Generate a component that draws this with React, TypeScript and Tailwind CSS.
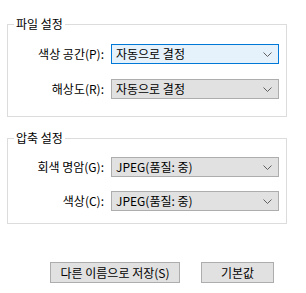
import React from "react";

const Chevron = () => (
  <svg width="9" height="5" viewBox="0 0 9 5" className="shrink-0">
    <path d="M0.5 0.5 L4.5 4.5 L8.5 0.5" fill="none" stroke="#606060" strokeWidth="1" />
  </svg>
);

const Combo = ({ value, focused }: { value: string; focused?: boolean }) => (
  <div
    className={
      focused
        ? "flex h-[20px] w-[168px] items-center justify-between border border-[#0078d7] bg-[#e5f1fb] pl-[4px] pr-[6px]"
        : "flex h-[20px] w-[168px] items-center justify-between border border-[#adadad] bg-[#e1e1e1] pl-[4px] pr-[6px]"
    }
  >
    <span className="leading-none">{value}</span>
    <Chevron />
  </div>
);

const Row = ({ label, value, focused }: { label: string; value: string; focused?: boolean }) => (
  <div className="flex items-center gap-[7px]">
    <div className="w-[90px] text-right">{label}</div>
    <Combo value={value} focused={focused} />
  </div>
);

const Group = ({ title, children }: { title: string; children: React.ReactNode }) => (
  <fieldset className="mx-[7px] w-[280px] border border-[#dcdcdc] pl-[6px]">
    <legend className="px-[2px] leading-[16px]">{title}</legend>
    {children}
  </fieldset>
);

export default function App() {
  return (
    <div
      className="flex h-[293px] w-[306px] flex-col bg-white pt-[16px] text-[12px] text-black"
      style={{ fontFamily: '"Noto Sans CJK KR", "Noto Sans", sans-serif' }}
    >
      <Group title="파일 설정">
        <div className="flex flex-col gap-[15px] pt-[12px] pb-[17px]">
          <Row label="색상 공간(P):" value="자동으로 결정" focused />
          <Row label="해상도(R):" value="자동으로 결정" />
        </div>
      </Group>
      <div className="h-[13px]" />
      <Group title="압축 설정">
        <div className="flex flex-col gap-[14px] pt-[11px] pb-[12px]">
          <Row label="회색 명암(G):" value="JPEG(품질: 중)" />
          <Row label="색상(C):" value="JPEG(품질: 중)" />
        </div>
      </Group>
      <div className="flex gap-[21px] pl-[50px] pt-[38px]">
        <button className="h-[21px] w-[130px] border border-[#adadad] bg-[#e1e1e1] leading-none">
          다른 이름으로 저장(S)
        </button>
        <button className="h-[21px] w-[73px] border border-[#adadad] bg-[#e1e1e1] leading-none">
          기본값
        </button>
      </div>
    </div>
  );
}
